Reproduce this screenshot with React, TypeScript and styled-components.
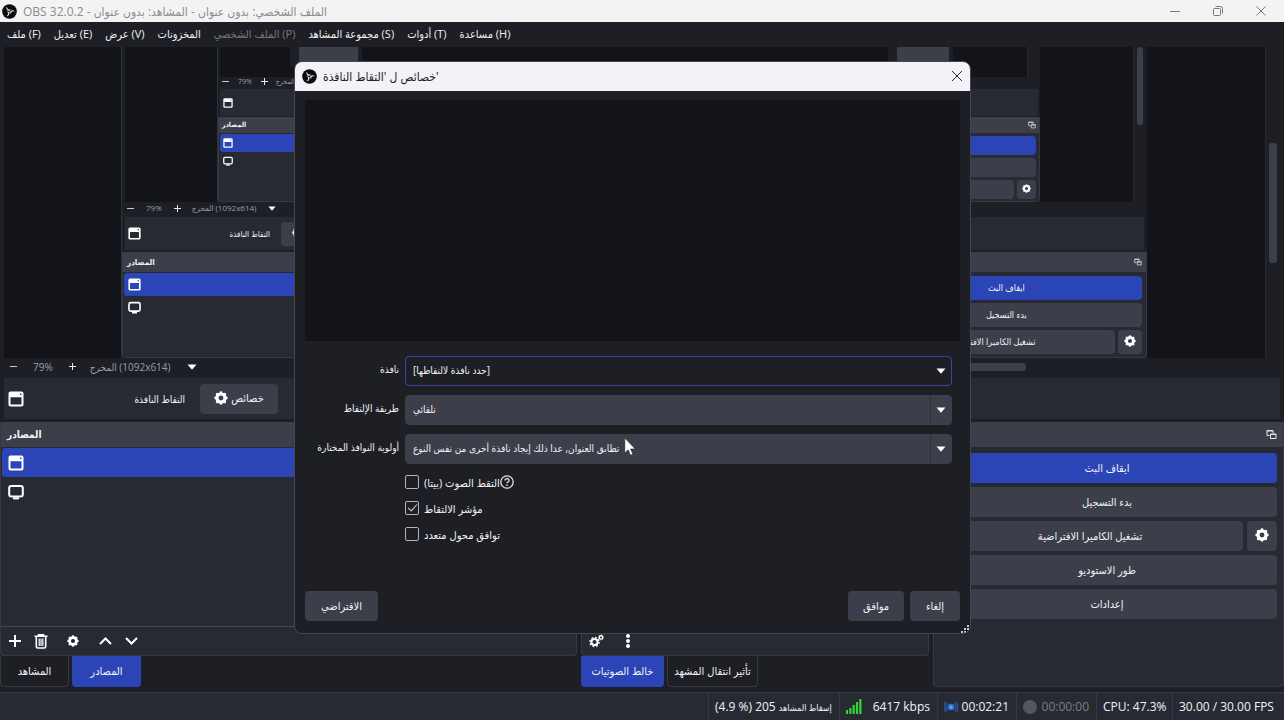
import React from "react";
import styled, { createGlobalStyle, ThemeProvider, css } from "styled-components";

const c = {
  base: "#1e1f25",
  canvas: "#131419",
  dock: "#282a33",
  header: "#3c3e4a",
  line: "#363843",
  blue: "#2b45b6",
  text: "#f2f2f5",
};

interface Metrics {
  level: number;
  font: number;
  small: number;
  icon: number;
  inset: number;
  canvas: number;
  zoom: number;
  zoomPad: number;
  zoomMid: number;
  zoomText: number;
  zoomEnd: number;
  context: number;
  gap: number;
  header: number;
  row: number;
  listRow: number;
  pad: number;
  space: number;
  name: number;
  prop: number;
  scroll: number;
  thumb: number;
}

const levels: Metrics[] = [
  { level: 0, font: 11, small: 10, icon: 16, inset: 4, canvas: 311, zoom: 20, zoomPad: 9, zoomMid: 15, zoomText: 13, zoomEnd: 16, context: 41, gap: 3, header: 25, row: 30, listRow: 29, pad: 6, space: 4, name: 161, prop: 78, scroll: 19, thumb: 8 },
  { level: 1, font: 9, small: 8, icon: 13, inset: 3, canvas: 155, zoom: 15, zoomPad: 4, zoomMid: 11, zoomText: 10, zoomEnd: 12, context: 33, gap: 2, header: 20, row: 24, listRow: 23, pad: 4, space: 3, name: 129, prop: 62, scroll: 14, thumb: 6 },
  { level: 2, font: 8, small: 7, icon: 10, inset: 2, canvas: 30, zoom: 12, zoomPad: 3, zoomMid: 8, zoomText: 7, zoomEnd: 10, context: 27, gap: 1, header: 16, row: 19, listRow: 18, pad: 3, space: 3, name: 104, prop: 50, scroll: 13, thumb: 0 },
];

const m = (key: keyof Metrics) => (p: { theme: any }) => `${p.theme[key]}px`;

const Global = createGlobalStyle`
  * { box-sizing: border-box; }
  body {
    margin: 0;
    background: ${c.base};
    color: ${c.text};
    font-family: "Open Sans", "DejaVu Sans Condensed", "DejaVu Sans", sans-serif;
    font-size: 11px;
  }
  button, select, input { font: inherit; color: inherit; margin: 0; }
  svg { display: block; flex: none; }
`;

const Page = styled.div`
  position: relative;
  display: flex;
  flex-direction: column;
  min-height: 100vh;
  overflow: hidden;
  white-space: nowrap;
`;

const TitleBar = styled.header`
  display: flex;
  align-items: center;
  gap: 6px;
  height: 22px;
  padding: 0 2px;
  background: #f3f3f4;
  color: #8b8b8e;
  font-size: 12px;
`;

const TitleText = styled.span`
  flex: 1;
`;

const WindowButtons = styled.div`
  display: flex;
`;

const WindowButton = styled.button`
  display: grid;
  place-items: center;
  width: 43px;
  height: 20px;
  padding: 0;
  border: 0;
  background: none;
`;

const MenuBar = styled.nav`
  display: flex;
  align-items: center;
  gap: 13px;
  height: 25px;
  padding: 0 7px 2px;
`;

const MenuItem = styled.button<{ $dim?: boolean }>`
  padding: 0;
  border: 0;
  background: none;
  color: ${(p) => (p.$dim ? "#77787e" : c.text)};
`;

const Shell = styled.div`
  display: flex;
  flex-direction: column;
  flex: 1;
  min-width: 0;
  overflow: hidden;
  background: ${c.base};
  font-size: ${m("font")};
`;

const CanvasRow = styled.div`
  display: flex;
  height: ${m("canvas")};
  padding-left: ${m("inset")};
`;

const Canvas = styled.div`
  display: flex;
  flex: 1;
  min-width: 0;
  overflow: hidden;
  background: ${c.canvas};
`;

const Mirror = styled.div<{ $l: number; $r: number }>`
  display: flex;
  flex: 1;
  min-width: 0;
  margin: 0 ${(p) => p.$r}px 0 ${(p) => p.$l}px;
  border-left: 1px solid #30323b;
  overflow: hidden;
`;

const Fragments = styled.div`
  display: flex;
  flex: 1;
  justify-content: space-between;
  padding: 0 74px 0 70px;
`;

const Fragment = styled.div<{ $w: number }>`
  width: ${(p) => p.$w}px;
  height: 20px;
  border: solid ${c.base};
  border-width: 0 4px 0 9px;
  background: ${c.header};
`;

const VScroll = styled.div<{ $top: number; $size: number }>`
  width: ${m("scroll")};
  padding: ${(p) => p.$top}px 0 0 3px;
  border-left: 1px solid #26272f;
  &::before {
    content: "";
    display: block;
    width: ${m("thumb")};
    height: ${(p) => p.$size}px;
    border-radius: 3px;
    background: ${c.header};
  }
`;

const ZoomRow = styled.div`
  display: flex;
  align-items: center;
  height: ${m("zoom")};
  padding: 0 0 3px ${m("zoomPad")};
  color: #9b9ca3;
  font-size: ${m("small")};
  line-height: 1;
`;

const ZoomButton = styled.button`
  padding: 0;
  border: 0;
  background: none;
`;

const ZoomValue = styled.span`
  margin: 0 ${m("zoomMid")};
`;

const ZoomLabel = styled.span`
  margin: 0 ${m("zoomEnd")} 0 ${m("zoomText")};
`;

const HScroll = styled.div`
  flex: 1;
  display: flex;
  justify-content: flex-end;
  padding-right: 258px;
  &::before {
    content: "";
    width: 620px;
    height: 8px;
    border-radius: 3px;
    background: ${c.header};
  }
`;

const ContextBar = styled.div`
  display: flex;
  align-items: center;
  height: ${m("context")};
  margin: 0 ${m("inset")} ${m("gap")} ${m("inset")};
  padding-left: ${m("space")};
  background: ${c.dock};
`;

const ContextName = styled.span`
  width: ${m("name")};
  margin-right: ${(p) => (p.theme.level ? 11 : 15)}px;
  font-size: ${m("small")};
  text-align: right;
`;

const Button = styled.button<{ $primary?: boolean; $w?: number }>`
  display: flex;
  align-items: center;
  justify-content: center;
  gap: 3px;
  ${(p) => (p.$w ? css`flex: none; width: ${p.$w}px;` : css`flex: 1 0 auto;`)}
  min-width: 0;
  height: ${m("row")};
  padding: 0 0 2px;
  border: 0;
  border-radius: 4px;
  background: ${(p) => (p.$primary ? c.blue : c.header)};
`;

const Docks = styled.div`
  display: grid;
  grid-template-columns: 577fr 348fr 351fr;
  gap: ${m("inset")};
  flex: 1;
  min-height: 0;
`;

const DockColumn = styled.section`
  display: flex;
  flex-direction: column;
  min-width: 0;
`;

const Panel = styled.div`
  display: flex;
  flex-direction: column;
  flex: 1;
  border: 1px solid ${c.line};
  border-top: 0;
  border-radius: 0 0 4px 4px;
  background: ${c.dock};
`;

const DockHeader = styled.div`
  display: flex;
  align-items: center;
  justify-content: space-between;
  height: ${m("header")};
  padding: 0 ${m("pad")} 1px;
  background: ${c.header};
  font-size: ${m("small")};
  font-weight: 700;
`;

const SourceList = styled.ul`
  flex: 1;
  margin: 0;
  padding: 1px 0 0 1px;
  list-style: none;
`;

const Source = styled.li<{ $active?: boolean }>`
  display: flex;
  align-items: center;
  height: ${m("listRow")};
  padding-left: ${m("pad")};
  border-radius: 3px;
  background: ${(p) => (p.$active ? c.blue : "transparent")};
`;

const Controls = styled.div`
  display: flex;
  flex-direction: column;
  gap: ${m("space")};
  padding: ${m("pad")} ${m("pad")} 0 3px;
`;

const ControlRow = styled.div`
  display: flex;
  gap: ${m("space")};
`;

const Toolbar = styled.div`
  display: flex;
  align-items: center;
  height: 29px;
  padding: 0 1px;
  border-top: 1px solid #454751;
`;

const ToolGap = styled.span`
  width: 6px;
`;

const ToolButton = styled.button`
  display: grid;
  place-items: center;
  width: 26px;
  height: 26px;
  padding: 0;
  border: 0;
  background: none;
`;

const Tabs = styled.div`
  display: flex;
  gap: 3px;
  height: 31px;
`;

const Tab = styled.button<{ $active?: boolean; $w: number }>`
  width: ${(p) => p.$w}px;
  padding: 0 0 2px;
  border: 1px solid ${(p) => (p.$active ? c.blue : c.line)};
  border-top: 0;
  border-radius: 0 0 4px 4px;
  background: ${(p) => (p.$active ? c.blue : c.base)};
`;

const StatusBar = styled.footer`
  display: flex;
  justify-content: flex-end;
  height: 28px;
  margin-top: 5px;
  padding-right: 5px;
  border-top: 1px solid ${c.line};
  background: ${c.dock};
  font-size: 12px;
`;

const Status = styled.div<{ $w: number; $dim?: boolean }>`
  display: flex;
  align-items: center;
  justify-content: space-between;
  width: ${(p) => p.$w}px;
  padding: 0 7px 0 6px;
  border-left: 1px solid ${c.line};
  color: ${(p) => (p.$dim ? "#7d7e86" : c.text)};
`;

const StatusWords = styled.span`
  font-size: 9px;
`;

const Dialog = styled.section`
  position: absolute;
  top: 61px;
  left: 294px;
  right: 313px;
  display: flex;
  flex-direction: column;
  height: 573px;
  overflow: hidden;
  border: 1px solid #44464f;
  border-radius: 8px;
  background: ${c.base};
`;

const DialogTitle = styled.header`
  display: flex;
  align-items: center;
  gap: 6px;
  height: 29px;
  padding: 0 0 1px 7px;
  background: #f3f2f8;
  color: #1d1d20;
  font-size: 12px;
`;

const DialogBody = styled.div`
  display: flex;
  flex-direction: column;
  flex: 1;
  padding: 9px 10px 12px;
`;

const CapturePreview = styled.div`
  height: 241px;
  margin-bottom: 15px;
  background: ${c.canvas};
`;

const Form = styled.div`
  display: grid;
  grid-template-columns: 94px 1fr;
  column-gap: 6px;
  row-gap: 9px;
  padding-right: 8px;
  font-size: 10px;
`;

const FieldLabel = styled.label`
  align-self: center;
  padding-bottom: 4px;
  text-align: right;
`;

const Field = styled.div<{ $focus?: boolean }>`
  display: flex;
  position: relative;
  height: 30px;
  border: 1px solid ${(p) => (p.$focus ? "#3c44a0" : c.header)};
  border-radius: 4px;
  background: ${(p) => (p.$focus ? c.base : c.header)};
  & > svg {
    position: absolute;
    right: 5px;
    top: 11px;
    pointer-events: none;
  }
  &::after {
    content: "";
    position: absolute;
    right: 20px;
    top: 0;
    bottom: 0;
    width: 1px;
    background: ${(p) => (p.$focus ? "transparent" : "#2d2f39")};
  }
`;

const Select = styled.select`
  flex: 1;
  appearance: none;
  padding: 0 24px 2px 7px;
  border: 0;
  outline: 0;
  background: none;
`;

const Checks = styled.div`
  display: flex;
  flex-direction: column;
  gap: 6px;
  margin: 8px 0 0 100px;
`;

const CheckLabel = styled.label`
  display: flex;
  align-items: center;
  height: 20px;
`;

const Check = styled.input`
  appearance: none;
  display: grid;
  place-items: center;
  width: 14px;
  height: 14px;
  margin-right: 5px;
  border: 1px solid #b3b4ba;
  border-radius: 2px;
  &:checked::after {
    content: "";
    width: 8px;
    height: 4px;
    margin-bottom: 3px;
    border: solid #d5d6da;
    border-width: 0 0 1px 1px;
    transform: rotate(-48deg);
  }
`;

const DialogActions = styled.div`
  display: flex;
  gap: 6px;
  margin-top: auto;
`;

const Spacer = styled.div`
  flex: 1;
`;

const Grip = styled.div`
  position: absolute;
  right: 1px;
  bottom: 0;
`;

const Pointer = styled.div`
  position: absolute;
  left: 624px;
  top: 437px;
`;

const Gear = ({ size }: { size: number }) => (
  <svg width={size} height={size} viewBox="0 0 16 16" fill="none" stroke="#fff">
    <circle cx="8" cy="8" r="4.6" strokeWidth="3.6" />
    {[0, 45, 90, 135, 180, 225, 270, 315].map((a) => (
      <path key={a} d="M8 2V3" strokeWidth="3.4" strokeLinecap="round" transform={`rotate(${a} 8 8)`} />
    ))}
  </svg>
);

const Gears = () => (
  <svg width="15" height="14" viewBox="0 0 15 14" fill="none" stroke="#fff">
    <circle cx="5.5" cy="8" r="3.1" strokeWidth="2" />
    <circle cx="5.5" cy="8" r="4.6" strokeWidth="1.4" strokeDasharray="1.8 1.8" />
    <circle cx="12" cy="3.4" r="1.7" strokeWidth="1.4" />
    <circle cx="12" cy="3.4" r="2.6" strokeWidth=".7" strokeDasharray="1 1" />
  </svg>
);

const WindowIcon = ({ size }: { size: number }) => (
  <svg width={size} height={size} viewBox="0 0 16 16">
    <path fill="#fff" fillRule="evenodd" d="M2.5 .5h11a2 2 0 0 1 2 2v11a2 2 0 0 1-2 2h-11a2 2 0 0 1-2-2v-11a2 2 0 0 1 2-2ZM2.5 6.3v7.2h11V6.3ZM12 2.6v1.5h1.4V2.6Z" />
  </svg>
);

const MonitorIcon = ({ size }: { size: number }) => (
  <svg width={size} height={size} viewBox="0 0 16 16" fill="none" stroke="#fff" strokeWidth="2">
    <rect x="1.2" y="2" width="13.6" height="10.4" rx="2" />
    <path d="M5 14.4h6" />
  </svg>
);

const PopOut = ({ size }: { size: number }) => (
  <svg width={size} height={size} viewBox="0 0 11 11" fill="none" stroke="#e6e6ea">
    <path d="M3.5 6.5h-2.500v-5h6v2.500M1 2h6" />
    <path d="M4.500 5h5.500v4.500h-5.500zM4.500 5.500h5.500" />
  </svg>
);

const Arrow = ({ size }: { size: number }) => (
  <svg width={size} height={size / 2 + 1} viewBox="0 0 10 6">
    <path fill="#fff" d="M.5 .5h9L5 5.700Z" />
  </svg>
);

const Logo = () => (
  <svg width="15" height="15" viewBox="0 0 16 16">
    <circle cx="8" cy="8" r="7.8" fill="#0b0b0d" />
    {[0, 120, 240].map((a) => (
      <path
        key={a}
        fill="#d9d9dc"
        transform={`rotate(${a} 8 8)`}
        d="M5.200 2.600C4 4.600 5 7 7.600 7.500 8.800 7.200 9.400 6.200 9.200 5.200 8.400 6.100 6.900 6 6.200 5.100 5.600 4.300 5.400 3.500 5.200 2.600Z"
      />
    ))}
  </svg>
);

const Line = ({ d, w, h, color = "#fff", sw = 2 }: { d: string; w: number; h: number; color?: string; sw?: number }) => (
  <svg width={w} height={h} viewBox={`0 0 ${w} ${h}`} fill="none" stroke={color} strokeWidth={sw}>
    <path d={d} />
  </svg>
);

function Console({ level }: { level: number }) {
  const t = levels[level];
  const main = level === 0;
  return (
    <ThemeProvider theme={t}>
      <Shell>
        <CanvasRow>
          <Canvas>
            {level === 2 ? (
              <Fragments><Fragment $w={72} /><Fragment $w={65} /></Fragments>
            ) : (
              <Mirror $l={main ? 117 : 92} $r={main ? 118 : 93}>
                <Console level={level + 1} />
              </Mirror>
            )}
          </Canvas>
          <VScroll $top={main ? 96 : 0} $size={main ? 120 : 78} />
        </CanvasRow>
        <ZoomRow>
          <ZoomButton aria-label="تصغير"><Line w={9} h={9} d="M1 4.500h7" color="#c9cad0" sw={1} /></ZoomButton>
          <ZoomValue>79%</ZoomValue>
          <ZoomButton aria-label="تكبير"><Line w={9} h={9} d="M1 4.500h7M4.500 1v7" color="#e9e9ee" sw={1} /></ZoomButton>
          <ZoomLabel>المخرج (1092x614)</ZoomLabel>
          <Arrow size={main ? 10 : 8} />
          {main && <HScroll />}
        </ZoomRow>
        <ContextBar>
          <WindowIcon size={t.icon} />
          <ContextName>التقاط النافذة</ContextName>
          <Button $w={t.prop}><Gear size={main ? 14 : 11} />خصائص</Button>
        </ContextBar>
        <Docks>
          <DockColumn>
            <Panel>
              <DockHeader>المصادر</DockHeader>
              <SourceList>
                <Source $active><WindowIcon size={t.icon} /></Source>
                <Source><MonitorIcon size={t.icon} /></Source>
              </SourceList>
              {main && (
                <Toolbar>
                  <ToolButton aria-label="إضافة"><Line w={16} h={16} d="M2 8h12M8 2v12" /></ToolButton>
                  <ToolButton aria-label="حذف">
                    <svg width="14" height="15" viewBox="0 0 14 15" fill="none" stroke="#fff">
                      <path strokeWidth="1.600" d="M.5 2.300h13M4.500 2V.9h5V2M2.300 3v9.300q0 1.700 1.700 1.700h6q1.700 0 1.700-1.700V3" />
                      <path strokeWidth="1.200" d="M5.200 4.500v7.500M7 4.500v7.500M8.800 4.500v7.500" />
                    </svg>
                  </ToolButton>
                  <ToolGap />
                  <ToolButton aria-label="إعدادات"><Gear size={12} /></ToolButton>
                  <ToolGap />
                  <ToolButton aria-label="أعلى"><Line w={13} h={8} d="M1 7l5.500-5.500L12 7" /></ToolButton>
                  <ToolButton aria-label="أسفل"><Line w={13} h={8} d="M1 1l5.500 5.500L12 1" /></ToolButton>
                </Toolbar>
              )}
            </Panel>
            {main && <Tabs><Tab $w={69}>المشاهد</Tab><Tab $w={69} $active>المصادر</Tab></Tabs>}
          </DockColumn>
          <DockColumn>
            <Panel>
              <DockHeader />
              <SourceList />
              {main && (
                <Toolbar>
                  <ToolButton aria-label="خصائص الصوت"><Gears /></ToolButton>
                  <ToolGap />
                  <ToolButton aria-label="المزيد">
                    <svg width="6" height="14" viewBox="0 0 6 14" fill="#fff">
                      <circle cx="3" cy="2" r="2" /><circle cx="3" cy="7" r="2" /><circle cx="3" cy="12" r="2" />
                    </svg>
                  </ToolButton>
                </Toolbar>
              )}
            </Panel>
            {main && <Tabs><Tab $w={83} $active>خالط الصوتيات</Tab><Tab $w={91}>تأثير انتقال المشهد</Tab></Tabs>}
          </DockColumn>
          <DockColumn>
            <Panel>
              <DockHeader><span /><PopOut size={main ? 11 : 8} /></DockHeader>
              <Controls>
                <Button $primary>ايقاف البث</Button>
                <Button>بدء التسجيل</Button>
                <ControlRow>
                  <Button>تشغيل الكاميرا الافتراضية</Button>
                  <Button $w={t.row} aria-label="إعدادات الكاميرا"><Gear size={main ? 14 : t.icon - 1} /></Button>
                </ControlRow>
                {main && <><Button>طور الاستوديو</Button><Button>إعدادات</Button></>}
              </Controls>
            </Panel>
          </DockColumn>
        </Docks>
      </Shell>
    </ThemeProvider>
  );
}

export default function App() {
  return (
    <ThemeProvider theme={levels[0]}>
      <Global />
      <Page>
        <TitleBar>
          <Logo />
          <TitleText>OBS 32.0.2 - الملف الشخصي: بدون عنوان - المشاهد: بدون عنوان</TitleText>
          <WindowButtons>
            <WindowButton aria-label="تصغير"><Line w={10} h={10} d="M0 5.500h10" color="#77777a" sw={1} /></WindowButton>
            <WindowButton aria-label="استعادة">
              <Line w={10} h={10} color="#77777a" sw={1} d="M.5 3.500q0-1 1-1h5q1 0 1 1v5q0 1-1 1h-5q-1 0-1-1zM2.500 .5h5q2 0 2 2v5" />
            </WindowButton>
            <WindowButton aria-label="إغلاق"><Line w={10} h={10} d="M.5 .5l9 9M9.500 .5l-9 9" color="#77777a" sw={1} /></WindowButton>
          </WindowButtons>
        </TitleBar>
        <MenuBar>
          <MenuItem>ملف (F)</MenuItem>
          <MenuItem>تعديل (E)</MenuItem>
          <MenuItem>عرض (V)</MenuItem>
          <MenuItem>المخزونات</MenuItem>
          <MenuItem $dim>الملف الشخصي (P)</MenuItem>
          <MenuItem>مجموعة المشاهد (S)</MenuItem>
          <MenuItem>أدوات (T)</MenuItem>
          <MenuItem>مساعدة (H)</MenuItem>
        </MenuBar>
        <Console level={0} />
        <StatusBar>
          <Status $w={131}>
            <bdi dir="rtl"><StatusWords>إسقاط المشاهد</StatusWords> 205 <bdi dir="ltr">(4.9 %)</bdi></bdi>
          </Status>
          <Status $w={98}>
            <svg width="16" height="15" viewBox="0 0 16 15" fill="#35d335">
              <path d="M0 11h2v4H0zM3.300 9h2.200v6H3.300zM6.600 6h2.200v9H6.600zM9.900 3h2.200v12H9.900zM13.200 0h2.300v15h-2.300z" />
            </svg>
            6417 kbps
          </Status>
          <Status $w={79}>
            <svg width="14" height="12" viewBox="0 0 14 12" fill="none" stroke="#27539b" strokeWidth="1.500">
              <circle cx="7" cy="6" r="2.500" fill="#5b9cf0" stroke="#2f6fd0" />
              <path d="M3.500 2q-2 4 0 8M10.500 2q2 4 0 8M1.200 1q-1.200 5 0 10M12.800 1q1.200 5 0 10" />
            </svg>
            00:02:21
          </Status>
          <Status $w={80} $dim>
            <svg width="14" height="14" viewBox="0 0 14 14" fill="#55565e"><circle cx="7" cy="7" r="7" /></svg>
            00:00:00
          </Status>
          <Status $w={76}>CPU: 47.3%</Status>
          <Status $w={107}>30.00 / 30.00 FPS</Status>
        </StatusBar>
        <Dialog role="dialog">
          <DialogTitle>
            <Logo />
            <TitleText>خصائص ل 'التقاط النافذة'</TitleText>
            <ToolButton aria-label="إغلاق"><Line w={12} h={12} d="M1 1l10 10M11 1L1 11" color="#2a2a2d" sw={1} /></ToolButton>
          </DialogTitle>
          <DialogBody>
            <CapturePreview />
            <Form>
              <FieldLabel htmlFor="win">نافذة</FieldLabel>
              <Field $focus><Select id="win"><option>[حدد نافذة لالتقاطها]</option></Select><Arrow size={10} /></Field>
              <FieldLabel htmlFor="method">طريقة الإلتقاط</FieldLabel>
              <Field><Select id="method"><option>تلقائي</option></Select><Arrow size={10} /></Field>
              <FieldLabel htmlFor="priority">أولوية النوافذ المختارة</FieldLabel>
              <Field>
                <Select id="priority"><option>تطابق العنوان, عدا ذلك إيجاد نافذة أخرى من نفس النوع</option></Select>
                <Arrow size={10} />
              </Field>
            </Form>
            <Checks>
              <CheckLabel>
                <Check type="checkbox" />التقط الصوت (بيتا)
                <svg width="14" height="14" viewBox="0 0 14 14" fill="none" stroke="#e4e4e8" strokeWidth="1.300">
                  <circle cx="7" cy="7" r="6.200" />
                  <path d="M5 5.600q0-2 2-2t2 1.800q0 1-1.200 1.600-.8.400-.8 1.300M7 9.500v1.400" />
                </svg>
              </CheckLabel>
              <CheckLabel><Check type="checkbox" defaultChecked />مؤشر الالتقاط</CheckLabel>
              <CheckLabel><Check type="checkbox" />توافق محول متعدد</CheckLabel>
            </Checks>
            <DialogActions>
              <Button $w={73}>الافتراضي</Button>
              <Spacer />
              <Button $w={56}>موافق</Button>
              <Button $w={50}>إلغاء</Button>
            </DialogActions>
          </DialogBody>
          <Grip>
            <svg width="8" height="8" viewBox="0 0 8 8" fill="#c9c9cf">
              <path d="M6 0h2v2H6zM3 3h2v2H3zM6 3h2v2H6zM0 6h2v2H0zM3 6h2v2H3zM6 6h2v2H6z" />
            </svg>
          </Grip>
        </Dialog>
        <Pointer>
          <svg width="12" height="20" viewBox="0 0 12 20">
            <path fill="#fff" stroke="#222" strokeWidth=".6" d="M.8 1v15l3.400-3.200 2.300 5.400 2.400-1-2.300-5.200h4.700Z" />
          </svg>
        </Pointer>
      </Page>
    </ThemeProvider>
  );
}
